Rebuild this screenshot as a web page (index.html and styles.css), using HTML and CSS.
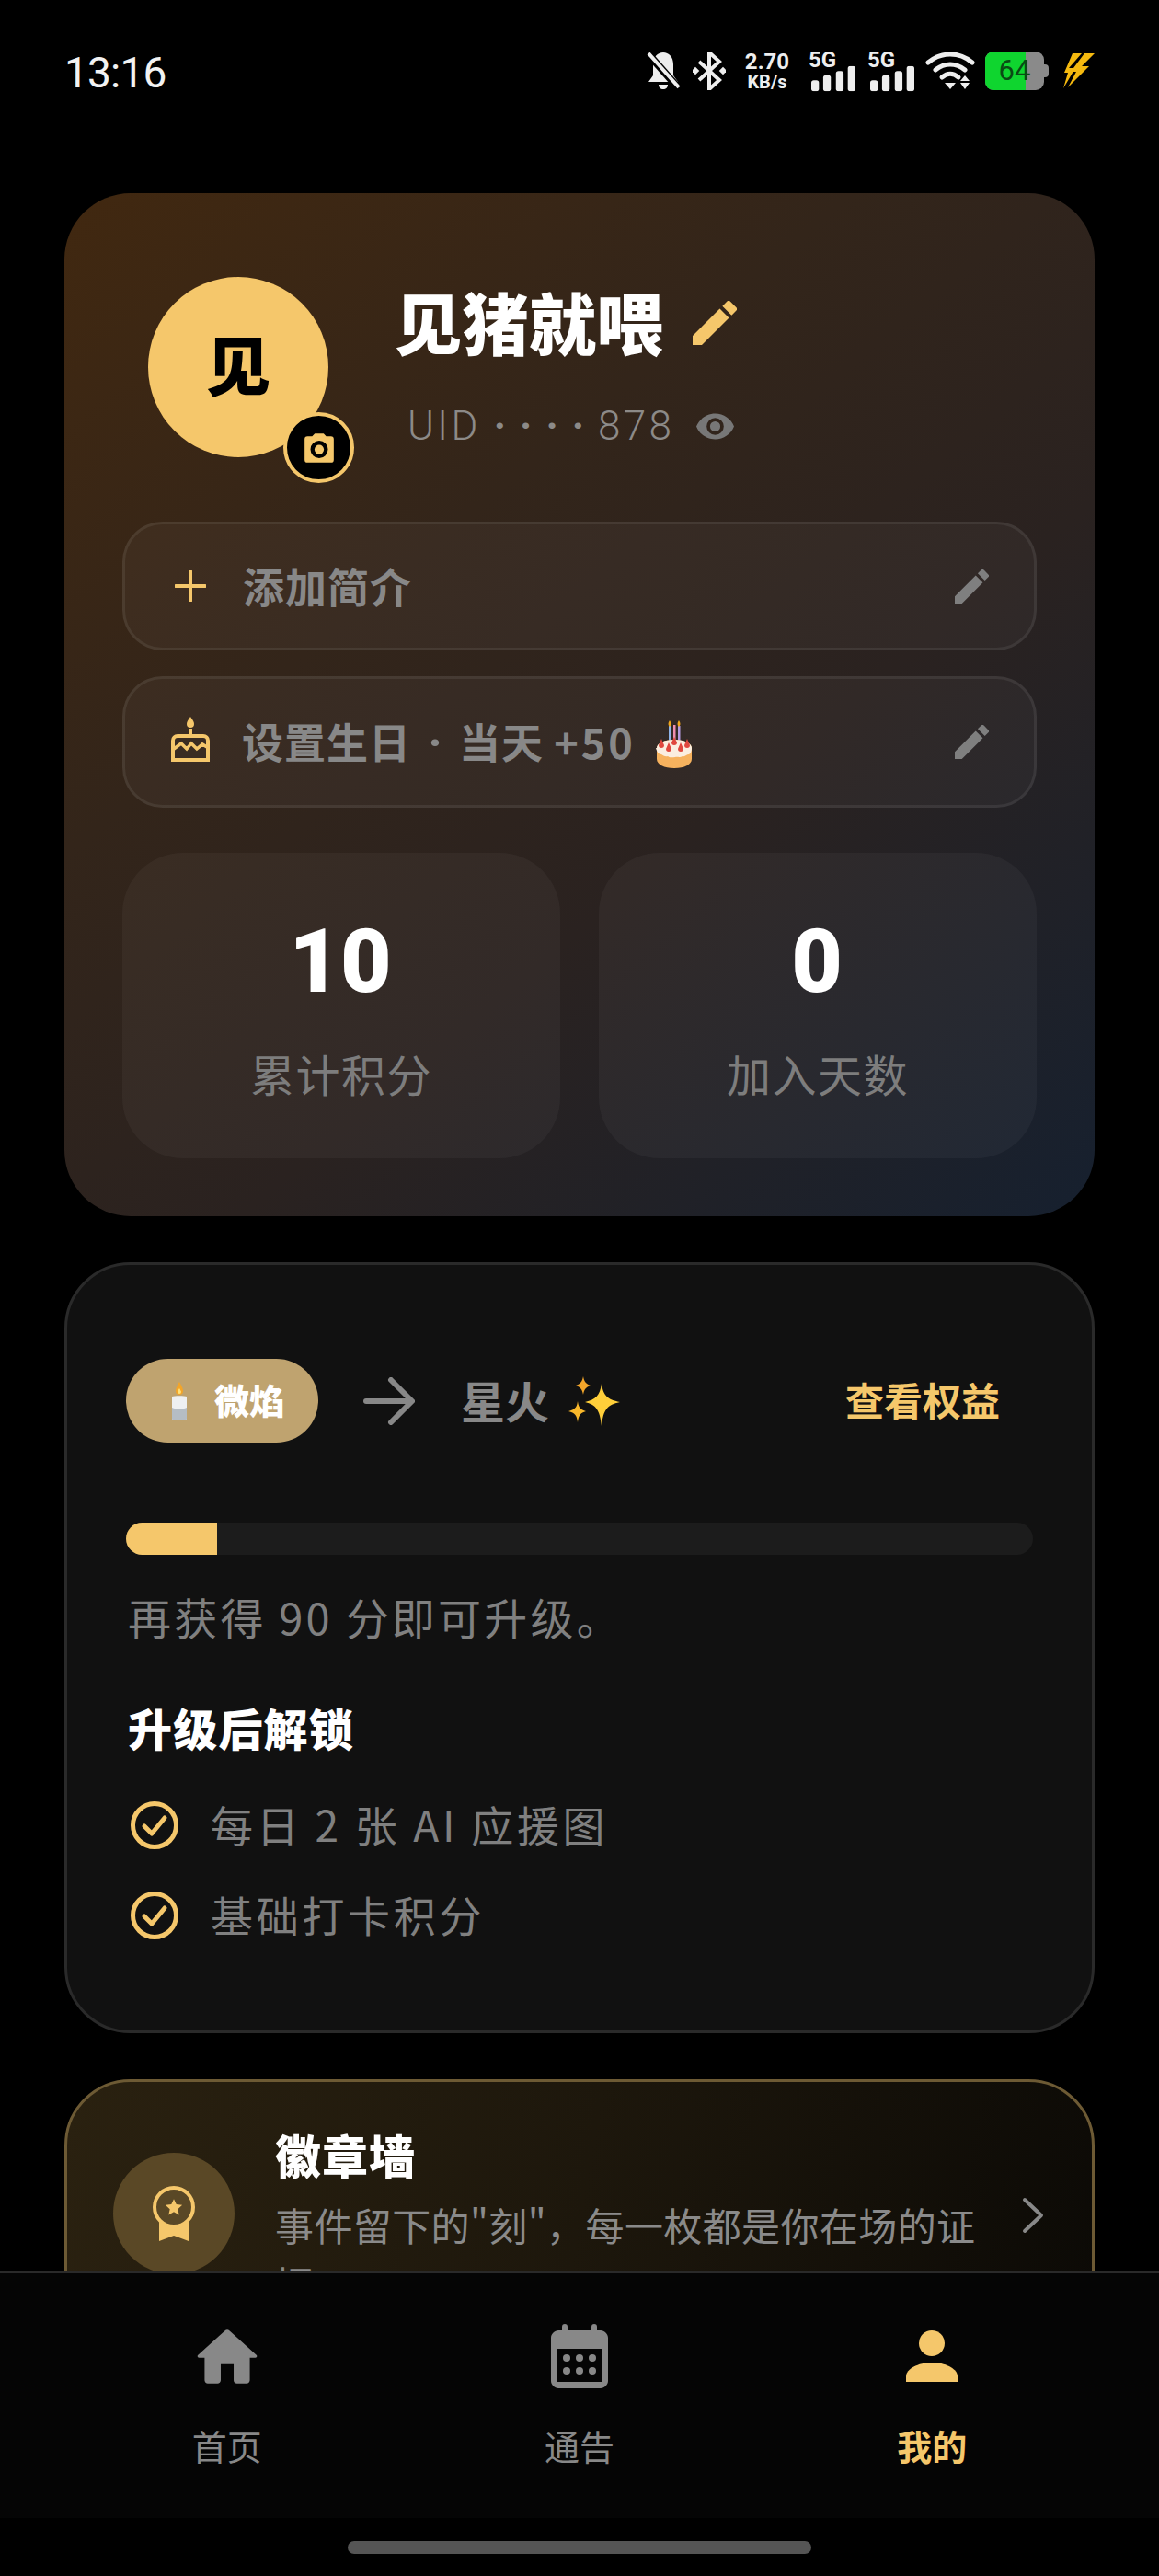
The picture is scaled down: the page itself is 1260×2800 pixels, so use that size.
FILE: index.html
```html
<!DOCTYPE html>
<html lang="zh-CN">
<head>
<meta charset="utf-8">
<title>我的</title>
<link rel="stylesheet" href="styles.css">
</head>
<body>
<svg class="defs" width="0" height="0" aria-hidden="true">
  <symbol id="pen" viewBox="3 3 18 18"><path d="M3 17.25V21h3.75L17.81 9.94l-3.75-3.75L3 17.25zM20.71 7.04a1 1 0 0 0 0-1.41l-2.34-2.34a1 1 0 0 0-1.41 0l-1.83 1.83 3.75 3.75 1.83-1.83z"/></symbol>
  <symbol id="check" viewBox="0 0 52 52"><circle cx="26" cy="26" r="23.5" fill="none" stroke="currentColor" stroke-width="5"/><path d="M15 27l8 8 14-17" fill="none" stroke="currentColor" stroke-width="5" stroke-linecap="round" stroke-linejoin="round"/></symbol>
  <symbol id="signal" viewBox="0 0 52 30"><rect x="0" y="17" width="9" height="13" rx="3"/><rect x="14" y="11" width="9" height="19" rx="3"/><rect x="29" y="6" width="9" height="24" rx="3"/><rect x="43" y="0" width="9" height="30" rx="3"/></symbol>
</svg>

<header class="status">
  <span class="time">13:16</span>
  <div class="status-icons">
    <svg class="st-bell" viewBox="0 0 38 42"><path d="M19 1c6 0 11 5 11 13v12l5 7H3l5-7V14C8 6 13 1 19 1z" fill="#eee"/><path d="M14 36h10c0 3-2 5-5 5s-5-2-5-5z" fill="#eee"/><path d="M3 3l32 36" stroke="#000" stroke-width="8"/><path d="M3 2l33 37" stroke="#eee" stroke-width="4"/></svg>
    <svg class="st-bt" viewBox="0 0 36 42"><path d="M7 11l22 20-11 10V1l11 10L7 31" fill="none" stroke="#eee" stroke-width="4"/><rect x="0" y="18" width="6" height="6" fill="#eee" transform="rotate(45 3 21)"/><rect x="30" y="18" width="6" height="6" fill="#eee" transform="rotate(45 33 21)"/></svg>
    <div class="st-speed"><span>2.70</span><span class="st-unit">KB/s</span></div>
    <div class="st-net"><span>5G</span><svg viewBox="0 0 52 30"><use href="#signal"/></svg></div>
    <div class="st-net"><span>5G</span><svg viewBox="0 0 52 30"><use href="#signal"/></svg></div>
    <svg class="st-wifi" viewBox="0 0 54 42"><g fill="none" stroke="#eee" stroke-width="5" stroke-linecap="round"><path d="M3 12C17 0 37 0 51 12"/><path d="M11 20c10-8 22-8 32 0"/><path d="M18 28c6-5 12-5 18 0"/></g><path d="M21 34h12l-6 7z" fill="#eee"/><path d="M43 26l5 6H38zM38 34h10l-5 7z" fill="#eee"/></svg>
    <div class="st-batt"><div class="st-batt-fill"></div><span>64</span><i></i></div>
    <svg class="st-bolt" viewBox="0 0 34 38"><path d="M10 0h10L6 16h7L0 38l5-17H1zM23 0h11L20 14h8L5 37l9-17H8z" fill="#f5b90f"/></svg>
  </div>
</header>

<main class="scroll">
  <section class="card profile">
    <div class="who">
      <div class="avatar">见
        <span class="cam">
          <svg viewBox="0 0 24 24"><path d="M9 2 7.17 4H4a2 2 0 0 0-2 2v14a2 2 0 0 0 2 2h16a2 2 0 0 0 2-2V6a2 2 0 0 0-2-2h-3.17L15 2H9zm3 17a6 6 0 1 1 0-12 6 6 0 0 1 0 12z"/><circle cx="12" cy="13" r="3.2"/></svg>
        </span>
      </div>
      <div class="who-text">
        <div class="name-line">
          <h1 class="name">见猪就喂</h1>
          <svg class="name-pen"><use href="#pen"/></svg>
        </div>
        <div class="uid-line">
          <span class="uid">UID <span class="uid-dots">····</span>878</span>
          <svg class="eye" viewBox="1 4.5 22 15"><path d="M12 4.5C7 4.5 2.73 7.61 1 12c1.73 4.39 6 7.5 11 7.5s9.27-3.11 11-7.5c-1.73-4.39-6-7.5-11-7.5zM12 17a5 5 0 1 1 0-10 5 5 0 0 1 0 10zm0-8a3 3 0 1 0 0 6 3 3 0 0 0 0-6z"/></svg>
        </div>
      </div>
    </div>

    <div class="field">
      <svg class="field-icon plus" viewBox="0 0 34 34"><path d="M17 1v32M1 17h32" stroke="currentColor" stroke-width="4" stroke-linecap="round"/></svg>
      <span class="field-text">添加简介</span>
      <svg class="field-pen"><use href="#pen"/></svg>
    </div>
    <div class="field field-b">
      <svg class="field-icon cakeline" viewBox="0 0 44 50"><path d="M22 0c3 4 4 6 4 8a4 4 0 0 1-8 0c0-2 1-4 4-8z" fill="currentColor"/><rect x="20" y="13" width="4" height="8" fill="currentColor"/><path d="M8 21h28a5 5 0 0 1 5 5v21H3V26a5 5 0 0 1 5-5z" fill="none" stroke="currentColor" stroke-width="4"/><path d="M4 35l8-6 6 6 5-6 6 6 6-5 5 3" fill="none" stroke="currentColor" stroke-width="3.5"/></svg>
      <span class="field-text">设置生日<span class="sep">·</span>当天 <span class="bonus">+50</span></span>
      <svg class="emoji-cake" viewBox="3 0 40 52">
        <rect x="17" y="6" width="2.5" height="22" fill="#8fb4e8"/><rect x="22" y="5" width="2.5" height="23" fill="#f08fb0"/><rect x="27" y="6" width="2.5" height="22" fill="#b59be0"/>
        <path d="M18 0c2 3 2 5 0 7-2-2-2-4 0-7zM28 0c2 3 2 5 0 7-2-2-2-4 0-7z" fill="#f2a71b"/>
        <path d="M4 30c0-5 8-9 19-9s19 4 19 9v12c0 6-8 10-19 10S4 48 4 42z" fill="#f6b25e"/>
        <path d="M4 30c0-5 8-9 19-9s19 4 19 9c0 3-1 6-3 7-3 0-4 3-7 2-3 2-6 0-8 1-3 0-6 1-8-1-3 1-5-1-7-2-3 0-5-3-6-7z" fill="#fbeee0"/>
        <path d="M6 27l3-7 3 7a3 3 0 0 1-6 0zM14 31l3-7 3 7a3 3 0 0 1-6 0zM27 31l3-7 3 7a3 3 0 0 1-6 0zM34 27l3-7 3 7a3 3 0 0 1-6 0zM20 24l3-6 3 6a3 3 0 0 1-6 0z" fill="#e0483e"/>
      </svg>
      <svg class="field-pen"><use href="#pen"/></svg>
    </div>

    <div class="stats">
      <div class="stat"><strong>10</strong><span>累计积分</span></div>
      <div class="stat"><strong>0</strong><span>加入天数</span></div>
    </div>
  </section>

  <section class="card level">
    <div class="level-head">
      <div class="chip">
        <svg class="emoji-candle" viewBox="0 0 18 42"><path d="M9 0c3 5 4 8 4 10a4 4 0 0 1-8 0c0-2 1-5 4-10z" fill="#f2a52a"/><path d="M9 7c1 2 2 3 2 4a2 2 0 0 1-4 0c0-1 1-2 2-4z" fill="#ffe27a"/><path d="M1 16c2-1 14-1 16 0v24a2 2 0 0 1-2 2H3a2 2 0 0 1-2-2z" fill="#eef0f2"/><path d="M1 28c5 2 11 2 16 0v12a2 2 0 0 1-2 2H3a2 2 0 0 1-2-2z" fill="#b5bdc4"/></svg>
        <span>微焰</span>
      </div>
      <svg class="arrow" viewBox="0 0 56 52"><path d="M3 26h49M30 3l23 23-23 23" fill="none" stroke="#888" stroke-width="6" stroke-linecap="round" stroke-linejoin="round"/></svg>
      <span class="next">星火</span>
      <svg class="emoji-spark" viewBox="0 0 56 54"><path d="M36 8c2 13 6 17 20 20-14 3-18 8-20 26-2-18-6-23-18-26 12-3 16-7 18-20z" fill="#ffcf3a"/><path d="M16 0c1 6 3 8 8 10-5 2-7 4-8 10-1-6-3-8-8-10 5-2 7-4 8-10z" fill="#f4a62a"/><path d="M10 27c1 7 3 9 9 11-6 2-8 4-9 12-1-8-3-10-10-12 7-2 9-4 10-11z" fill="#f9b82b"/></svg>
      <a class="rights">查看权益</a>
    </div>
    <div class="bar"><div class="bar-fill" style="width:10%"></div></div>
    <p class="hint">再获得 90 分即可升级。</p>
    <h2 class="unlock">升级后解锁</h2>
    <ul class="perks">
      <li><svg class="perk-icon"><use href="#check"/></svg><span>每日 2 张 AI 应援图</span></li>
      <li><svg class="perk-icon"><use href="#check"/></svg><span>基础打卡积分</span></li>
    </ul>
  </section>

  <section class="card honor">
    <div class="honor-icon">
      <svg viewBox="0 0 46 60"><path d="M7 34v26l16-6 16 6V34z" fill="#f5c76b"/><circle cx="23" cy="23" r="21" fill="#5a4826" stroke="#f5c76b" stroke-width="4"/><path d="M23 12l3.4 7.4 8 .9-6 5.4 1.7 7.9-7.1-4-7.1 4 1.7-7.9-6-5.4 8-.9z" fill="#f5c76b" transform="translate(4.6 4.6) scale(.8)"/></svg>
    </div>
    <div class="honor-text">
      <h2>徽章墙</h2>
      <p>事件留下的"刻"，每一枚都是你在场的证据</p>
    </div>
    <svg class="chev" viewBox="0 0 24 40"><path d="M3 3l18 17L3 37" fill="none" stroke="#888" stroke-width="4" stroke-linecap="round" stroke-linejoin="round"/></svg>
  </section>
</main>

<nav class="tabs">
  <a class="tab">
    <span class="tab-icon"><svg class="ic-home" viewBox="2.6 3.3 18.8 16.7"><path d="M10 19v-5h4v5c0 .55.45 1 1 1h3c.55 0 1-.45 1-1v-7h1.7c.46 0 .68-.57.33-.87L12.67 3.6c-.38-.34-.96-.34-1.34 0l-8.36 7.53c-.34.3-.13.87.33.87H5v7c0 .55.45 1 1 1h3c.55 0 1-.45 1-1z" fill="#888"/></svg></span>
    <span>首页</span>
  </a>
  <a class="tab">
    <span class="tab-icon"><svg class="ic-cal" viewBox="0 0 62 70"><path fill-rule="evenodd" d="M15 0c2 0 3 1 3 3v4h26V3c0-2 1-3 3-3s3 1 3 3v4h4c4 0 8 4 8 8v47c0 4-4 8-8 8H8c-4 0-8-4-8-8V15c0-4 4-8 8-8h4V3c0-2 1-3 3-3zM7 27v36h48V27z" fill="#888"/><g fill="#888"><circle cx="17" cy="37" r="4"/><circle cx="31" cy="37" r="4"/><circle cx="45" cy="37" r="4"/><circle cx="17" cy="51" r="4"/><circle cx="31" cy="51" r="4"/><circle cx="45" cy="51" r="4"/></g></svg></span>
    <span>通告</span>
  </a>
  <a class="tab tab-on">
    <span class="tab-icon"><svg class="ic-me" viewBox="0 0 56 56"><circle cx="28" cy="14" r="14" fill="#f5c76b"/><path d="M0 56v-6c0-8 13-15 28-15s28 7 28 15v6z" fill="#f5c76b"/></svg></span>
    <span>我的</span>
  </a>
</nav>
<div class="home-bar"><i></i></div>
</body>
</html>
```
FILE: styles.css
```css
* { box-sizing: border-box; }
html, body { margin: 0; padding: 0; }
body {
  width: 1260px;
  height: 2800px;
  background: #000;
  color: #fff;
  font-family: "Noto Sans CJK SC", "Noto Sans", sans-serif;
  display: flex;
  flex-direction: column;
  overflow: hidden;
}
.defs { position: absolute; }
h1, h2, p, ul { margin: 0; padding: 0; }
ul { list-style: none; }
svg { display: block; flex: none; fill: currentColor; }

/* status bar */
.status {
  flex: none;
  height: 160px;
  padding: 52px 70px 0;
  display: flex;
  justify-content: space-between;
  align-items: flex-start;
}
.time { font: 400 46px/54px Roboto, sans-serif; color: #f2f2f2; letter-spacing: -.8px; }
.status-icons { display: flex; align-items: center; height: 50px; color: #eee; }
.st-bell { width: 38px; height: 42px; margin-left: 0; }
.st-bt { width: 36px; height: 42px; margin-left: 13px; }
.st-speed {
  width: 50px; margin-left: 20px;
  display: flex; flex-direction: column; align-items: center;
  font: 700 24px/24px Roboto, sans-serif;
}
.st-unit { font-size: 20px; line-height: 20px; }
.st-net { width: 50px; height: 46px; position: relative; margin-left: 20px; font: 700 24px/22px Roboto, sans-serif; }
.st-net + .st-net { margin-left: 14px; }
.st-net svg { position: absolute; left: 3px; bottom: 0; width: 48px; height: 29px; }
.st-net span { position: absolute; left: 0; top: 0; }
.st-wifi { width: 54px; height: 42px; margin-left: 13px; }
.st-batt {
  width: 64px; height: 42px; margin-left: 11px;
  position: relative; background: #8a8a8a; border-radius: 9px;
  font: 400 31px/42px Roboto, sans-serif; color: #0a4a14; text-align: center;
}
.st-batt span { position: relative; }
.st-batt-fill { position: absolute; left: 0; top: 0; bottom: 0; width: 44px; background: #0fd52f; border-radius: 9px 0 0 9px; }
.st-batt i { position: absolute; right: -5px; top: 14px; width: 5px; height: 14px; background: #8a8a8a; border-radius: 0 4px 4px 0; }
.st-bolt { width: 34px; height: 38px; margin-left: 21px; }

/* scroll area */
.scroll {
  flex: none;
  height: 2308px;
  padding: 50px 70px 0;
  display: flex;
  flex-direction: column;
  gap: 50px;
  overflow: hidden;
}
.card { flex: none; border-radius: 72px; }

/* profile card */
.profile {
  padding: 91px 63px 63px;
  background: linear-gradient(140deg, #412810 0%, #33251a 35%, #2a2220 62%, #16202f 100%);
}
.who { display: flex; align-items: flex-start; padding-left: 28px; margin-bottom: 70px; }
.avatar {
  position: relative;
  width: 196px; height: 196px;
  flex: none;
  border-radius: 50%;
  background: #f5c76b;
  color: #000;
  font-size: 70px; font-weight: 900; line-height: 188px; text-align: center;
}
.cam {
  position: absolute; right: -28px; bottom: -28px;
  width: 77px; height: 77px;
  border-radius: 50%;
  background: #000;
  border: 4px solid #f5c76b;
  display: flex; align-items: center; justify-content: center;
  color: #f5c76b;
}
.cam svg { width: 38px; height: 38px; }
.who-text { margin-left: 72px; padding-top: 2px; }
.name-line { display: flex; align-items: center; height: 90px; }
.name { font-size: 73px; font-weight: 900; line-height: 90px; }
.name-pen { width: 48px; height: 48px; margin: 5px 0 0 32px; color: #f5c76b; }
.uid-line { display: flex; align-items: center; height: 60px; margin: 40px 0 0 14px; }
.uid { font: 300 44px/60px Roboto, sans-serif; color: #8c8a88; letter-spacing: 3.4px; }
.uid-dots { font-weight: 700; letter-spacing: 15px; }
.eye { width: 41px; height: 29px; margin-left: 24px; color: #777; }

.field {
  height: 140px;
  margin-bottom: 28px;
  padding: 0 49px 0 52px;
  display: flex; align-items: center;
  border-radius: 44px;
  border: 3px solid rgba(255,255,255,.07);
  background: rgba(255,255,255,.035);
}
.field-b { height: 143px; margin-bottom: 49px; }
.field-icon { color: #f5c76b; }
.plus { width: 34px; height: 34px; margin-left: 2px; }
.cakeline { width: 44px; height: 50px; margin-left: -3px; margin-top: -6px; }
.field-text { font-size: 45px; font-weight: 700; color: #888; margin-left: 40px; letter-spacing: 1px; padding-bottom: 2px; }
.cakeline + .field-text { margin-left: 34px; }
.sep { display: inline-block; width: 52px; text-align: center; letter-spacing: 0; font-family: Roboto, sans-serif; font-size: 52px; line-height: 40px; }
.bonus { letter-spacing: 3px; }
.field-pen { width: 37px; height: 37px; margin-left: auto; color: #7f7f7f; }
.emoji-cake { width: 40px; height: 52px; margin-left: 22px; margin-top: 4px; }

.stats { display: grid; grid-template-columns: 1fr 1fr; gap: 42px; }
.stat {
  height: 332px;
  border-radius: 66px;
  background: rgba(255,255,255,.04);
  display: flex; flex-direction: column; align-items: center;
  padding-top: 62px;
}
.stat strong { font: 900 96px/112px Roboto, sans-serif; color: #fff; margin-left: -2px; }
.stat span { font-size: 48px; line-height: 66px; color: #7d7d7d; margin-top: 32px; letter-spacing: 1.5px; }

/* level card */
.level {
  padding: 102px 64px 99px;
  background: #111;
  border: 3px solid #2a2a2a;
}
.level-head { display: flex; align-items: center; height: 91px; }
.chip {
  width: 209px; height: 91px;
  border-radius: 46px;
  background: #bfa36f;
  display: flex; align-items: center; padding-left: 49px;
  font-size: 38px; font-weight: 900; color: #fff;
}
.emoji-candle { width: 18px; height: 42px; }
.chip span { margin-left: 29px; padding-bottom: 4px; }
.arrow { width: 56px; height: 52px; margin-left: 49px; }
.next { font-size: 48px; font-weight: 700; color: #888; margin-left: 50px; padding-bottom: 4px; }
.emoji-spark { width: 56px; height: 54px; margin-left: 21px; }
.rights { margin-left: auto; margin-right: 36px; font-size: 42px; font-weight: 700; color: #f5c76b; padding-bottom: 4px; }
.bar { height: 35px; margin-top: 87px; border-radius: 18px; background: #1c1c1c; overflow: hidden; }
.bar-fill { height: 100%; background: #f5c76b; }
.hint { margin: 34px 0 0 2px; font-size: 47px; line-height: 66px; color: #808080; letter-spacing: 3.2px; }
.unlock { margin: 57px 0 0 2px; font-size: 48px; line-height: 60px; font-weight: 900; letter-spacing: 1.2px; }
.perks { margin-top: 51px; display: flex; flex-direction: column; gap: 46px; }
.perks li { display: flex; align-items: center; height: 52px; padding-left: 5px; font-size: 46px; color: #808080; letter-spacing: 3.7px; }
.perks span { padding-bottom: 4px; }
.perk-icon { width: 52px; height: 52px; color: #f5c76b; margin-right: 35px; }

/* honor card */
.honor {
  padding: 48px 52px 40px 50px;
  display: flex; align-items: flex-start;
  border: 3px solid #6d5a34;
  background: linear-gradient(100deg, #2a2110 0%, #1d170c 50%, #0c0a06 100%);
}
.honor-icon {
  width: 132px; height: 132px; flex: none;
  margin-top: 29px;
  border-radius: 50%;
  background: #5a4826;
  display: flex; align-items: center; justify-content: center;
}
.honor-icon svg { width: 46px; height: 60px; }
.honor-text { flex: 1; margin-left: 44px; min-width: 0; }
.honor-text h2 { font-size: 50px; line-height: 60px; font-weight: 900; letter-spacing: 1px; }
.honor-text p { margin-top: 15px; font-size: 42px; line-height: 64px; color: #8a8a8a; letter-spacing: .4px; }
.chev { width: 24px; height: 40px; margin: 77px 0 0 36px; }

/* tabs */
.tabs {
  flex: none;
  height: 269px;
  border-top: 3px solid #2a2a2a;
  background: #050505;
  padding: 0 55px;
  display: grid;
  grid-template-columns: repeat(3, 1fr);
}
.tab { display: flex; flex-direction: column; align-items: center; padding-top: 53px; font-size: 38px; line-height: 50px; color: #888; }
.tab-icon { height: 74px; margin-bottom: 35px; display: flex; align-items: center; justify-content: center; }
.tab-on { color: #f5c76b; font-weight: 700; }
.ic-home { width: 66px; height: 59px; }
.ic-cal { width: 62px; height: 70px; }
.ic-me { width: 56px; height: 56px; }

.home-bar { flex: none; height: 63px; padding-top: 25px; display: flex; justify-content: center; align-items: flex-start; }
.home-bar i { width: 504px; height: 14px; border-radius: 7px; background: #555; }
```
